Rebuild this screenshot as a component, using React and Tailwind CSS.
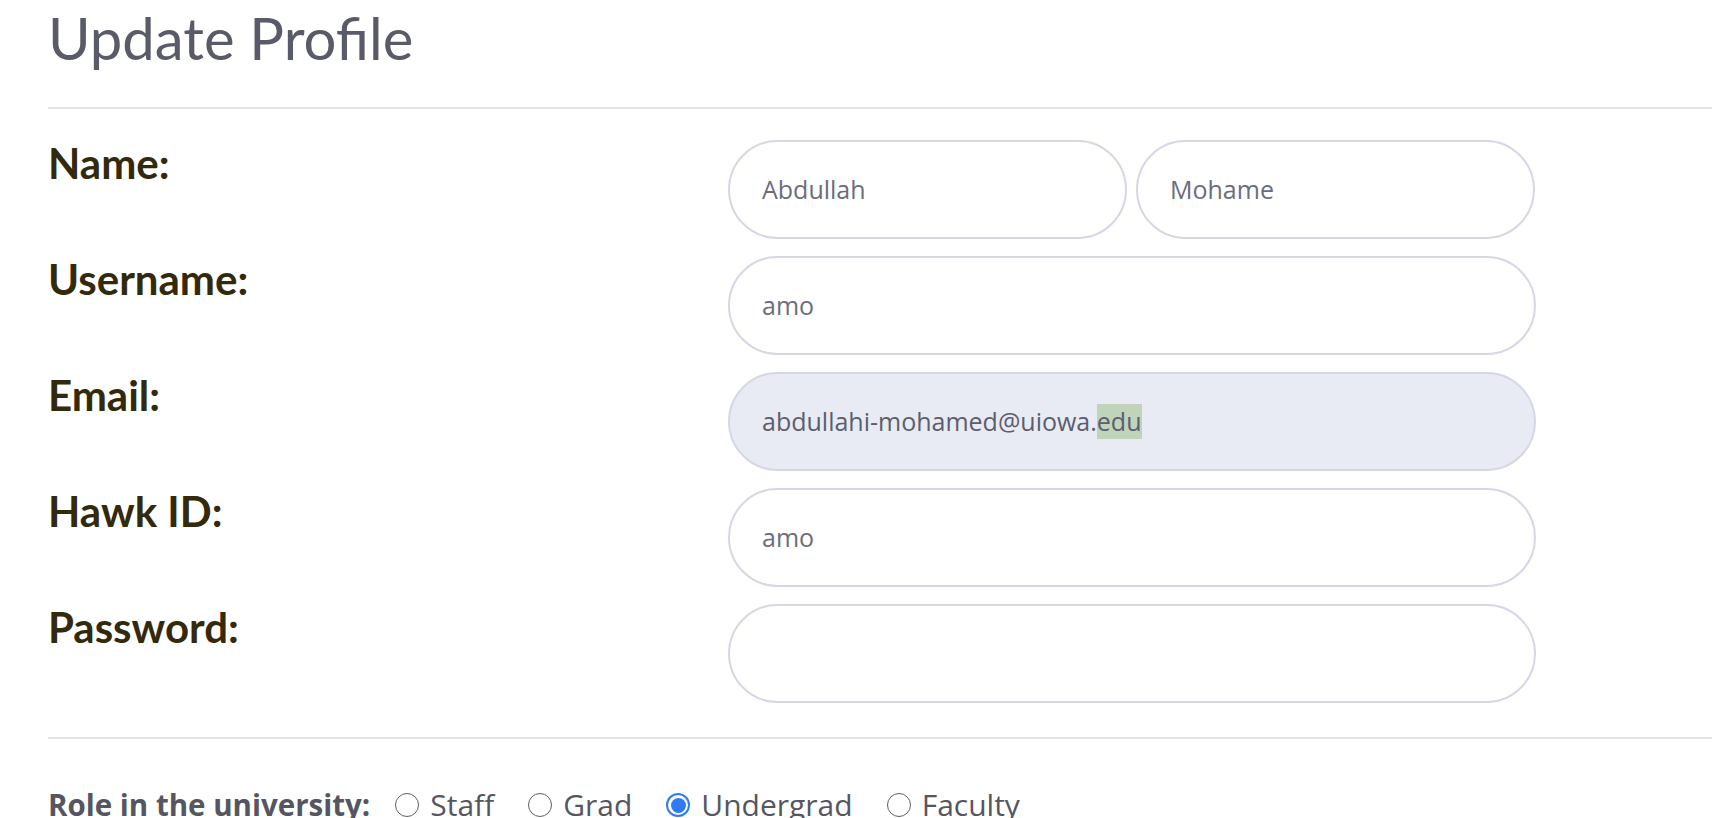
import React from 'react';

const labelCls = "font-['Lato',sans-serif] font-bold text-[42px] leading-[44px] text-[#33290c] pt-[1px]";
const inputCls = "h-[99px] rounded-full border-2 border-[#d5d6e6] bg-white flex items-center pl-[32px] font-['Open_Sans',sans-serif] text-[25px] text-[#6b6d7d]";

const FieldRow = ({ label, children }) => (
    <div className="grid grid-cols-[680px_808px]">
        <div className={labelCls}>{label}</div>
        <div>{children}</div>
    </div>
);

const Radio = ({ label, checked }) => (
    <label className="flex items-center gap-[11px]">
        {checked ? (
            <span className="w-[24px] h-[24px] rounded-full bg-[#2f7bf5] flex items-center justify-center">
                <span className="w-[20px] h-[20px] rounded-full bg-white flex items-center justify-center">
                    <span className="w-[15px] h-[15px] rounded-full bg-[#2f7bf5]" />
                </span>
            </span>
        ) : (
            <span className="w-[24px] h-[24px] rounded-full border-[1.5px] border-[#5f5f5f] bg-white" />
        )}
        <span>{label}</span>
    </label>
);

const App = () => {
    return (
        <div className="w-[1712px] h-[818px] overflow-hidden bg-white pl-[48px]">
            <h1 className="pt-[4px] font-['Lato',sans-serif] text-[58px] leading-[67px] text-[#5a5b68]">
                Update Profile
            </h1>
            <div className="mt-[36px] h-[2px] bg-[#e4e4e4]" />

            <div className="mt-[31px] flex flex-col gap-[17px]">
                <FieldRow label="Name:">
                    <div className="grid grid-cols-2 gap-[9px] w-[807px]">
                        <div className={inputCls}>Abdullah</div>
                        <div className={inputCls}>Mohame</div>
                    </div>
                </FieldRow>
                <FieldRow label="Username:">
                    <div className={inputCls}>amo</div>
                </FieldRow>
                <FieldRow label="Email:">
                    <div className={inputCls + " !bg-[#e8ebf3] !text-[#5b5e6e]"}>
                        abdullahi-mohamed@uiowa.
                        <span className="inline-block bg-[#c0d4bc] leading-[35px]">edu</span>
                    </div>
                </FieldRow>
                <FieldRow label="Hawk ID:">
                    <div className={inputCls}>amo</div>
                </FieldRow>
                <FieldRow label="Password:">
                    <div className={inputCls}></div>
                </FieldRow>
            </div>

            <div className="mt-[34px] h-[2px] bg-[#e4e4e4]" />

            <div className="mt-[48px] flex items-center font-['Open_Sans',sans-serif] text-[30px] leading-[36px] text-[#55565f]">
                <span className="font-bold text-[29.5px] mr-[25px]">Role in the university:</span>
                <div className="flex items-center gap-[34px]">
                    <Radio label="Staff" />
                    <Radio label="Grad" />
                    <Radio label="Undergrad" checked />
                    <Radio label="Faculty" />
                </div>
            </div>
        </div>
    );
};

export default App;
